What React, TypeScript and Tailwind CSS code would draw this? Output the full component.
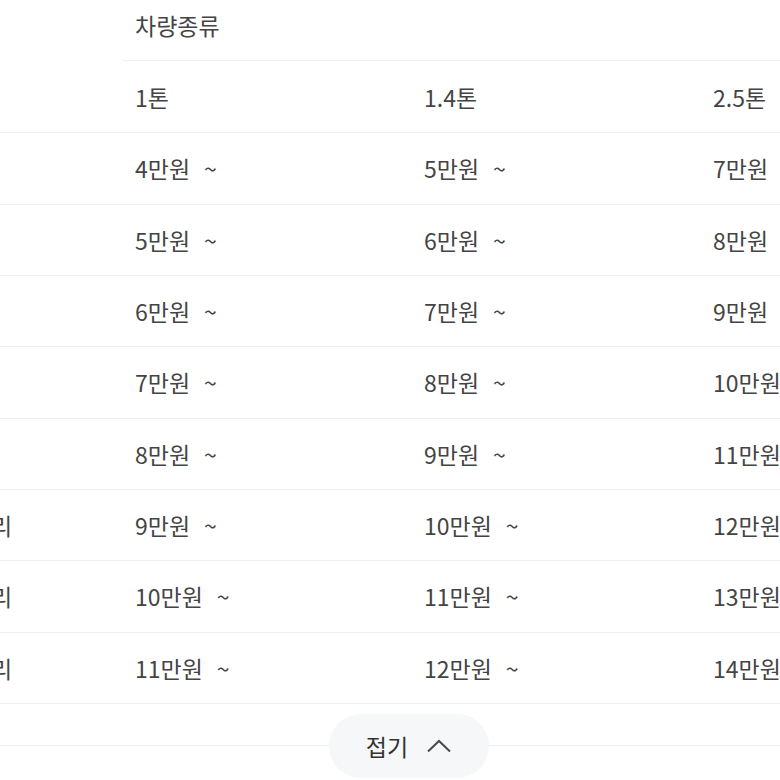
import React from 'react';

// 거리별 차량 요금표 (일부 펼침 상태)
const vehicles = ['1톤', '1.4톤', '2.5톤'];

const rows = [
  { label: '10km 이내', prices: [4, 5, 7] },
  { label: '20km 이내', prices: [5, 6, 8] },
  { label: '30km 이내', prices: [6, 7, 9] },
  { label: '40km 이내', prices: [7, 8, 10] },
  { label: '50km 이내', prices: [8, 9, 11] },
  { label: '60km 장거리', prices: [9, 10, 12] },
  { label: '70km 장거리', prices: [10, 11, 13] },
  { label: '80km 장거리', prices: [11, 12, 14] },
];

const font = { fontFamily: '"Noto Sans CJK KR", "Noto Sans", sans-serif' };

const PriceRow: React.FC<{ label: string; prices: number[] }> = ({ label, prices }) => (
  <div className="flex h-[71.33px] border-b border-[#eeeeee]">
    <div className="flex w-[350px] shrink-0 items-center justify-center">{label}</div>
    {prices.map((p, i) => (
      <div key={i} className="flex w-[289px] shrink-0 items-center pl-3 whitespace-nowrap">
        {p}만원
        <span className="ml-[14px]">~</span>
      </div>
    ))}
  </div>
);

export default function App() {
  return (
    <div className="h-[780px] w-[780px] overflow-hidden bg-white text-[23px] text-[#444444]" style={font}>
      <div className="-mt-[10px] -ml-[227px] w-[1217px]">
        {/* 헤더: 이동거리(rowspan) + 차량종류 */}
        <div className="flex">
          <div className="flex w-[350px] shrink-0 items-center justify-center border-b border-[#eeeeee]">
            이동거리
          </div>
          <div className="flex-1">
            <div className="flex h-[71.33px] items-center border-b border-[#eeeeee] pl-3">차량종류</div>
            <div className="flex h-[72px] border-b border-[#eeeeee]">
              {vehicles.map((v) => (
                <div key={v} className="flex w-[289px] shrink-0 items-center pl-3">
                  {v}
                </div>
              ))}
            </div>
          </div>
        </div>

        {rows.map((r) => (
          <PriceRow key={r.label} label={r.label} prices={r.prices} />
        ))}
      </div>

      {/* 접기 버튼 */}
      <div className="mt-[10px] flex h-[64px] items-center">
        <div className="h-px w-[329px] bg-[#eeeeee]" />
        <button className="flex h-[64px] w-[160px] shrink-0 items-center justify-center gap-[18px] rounded-full bg-[#f6f7f9] text-[#333333]">
          <span>접기</span>
          <svg width="26" height="14" viewBox="0 0 26 14" fill="none" stroke="#4a4a4a" strokeWidth="2">
            <path d="M2 12.5 L13 2 L24 12.5" />
          </svg>
        </button>
        <div className="h-px flex-1 bg-[#eeeeee]" />
      </div>
    </div>
  );
}
